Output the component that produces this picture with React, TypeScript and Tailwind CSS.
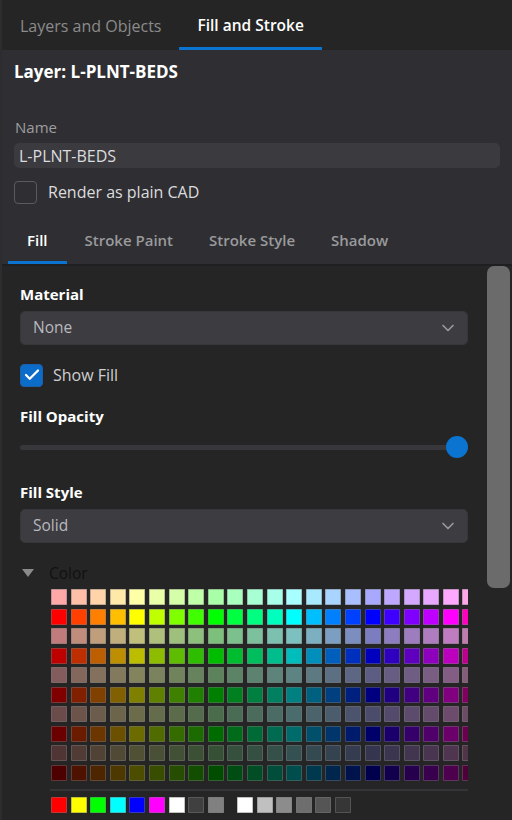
import { ChevronDown, Check } from "lucide-react";

const HUES = Array.from({ length: 24 }, (_, i) => i * 15);

// each row of the palette is one saturation / lightness pair applied to every hue
const ROWS: [number, number][] = [
  [100, 83],
  [100, 50],
  [35, 62],
  [100, 37],
  [17, 44],
  [100, 25],
  [18, 36],
  [100, 21],
  [20, 26],
  [100, 15],
];

const BASICS = ["#ff0000", "#ffff00", "#00ff00", "#00ffff", "#0000ff", "#ff00ff", "#ffffff", "#404040", "#808080"];
const GRAYS = ["#ffffff", "#c0c0c0", "#8c8c8c", "#6e6e6e", "#555555", "#363636"];

function Swatch({ color }: { color: string }) {
  return (
    <div
      className="h-4 w-4 shrink-0 rounded-[1px] shadow-[inset_0_0_0_1px_rgba(120,120,120,0.45)]"
      style={{ backgroundColor: color }}
    />
  );
}

function Select({ value }: { value: string }) {
  return (
    <div className="flex h-[34px] items-center justify-between rounded-[5px] border border-[#37373b] bg-[#3c3c41] pl-3 pr-[9px]">
      <span className="text-[15.5px] text-[#b9b9bd]">{value}</span>
      <ChevronDown size={20} strokeWidth={2} className="text-[#9a9a9e]" />
    </div>
  );
}

export default function App() {
  return (
    <div
      className="flex h-[820px] w-[512px] flex-col overflow-hidden border-l-2 border-[#2d2d30] bg-[#252526]"
      style={{ fontFamily: '"Open Sans", "Noto Sans", sans-serif' }}
    >
      {/* panel tabs */}
      <div className="flex h-[50px] shrink-0 bg-[#252525]">
        <div className="flex items-center px-[18px] pt-[2px] text-[16px] text-[#8b8b8b]">Layers and Objects</div>
        <div className="flex items-center border-b-[3px] border-[#0a74d0] px-[18px] pt-[5px] text-[15.5px] font-semibold text-white">
          Fill and Stroke
        </div>
      </div>

      {/* layer header */}
      <div className="flex shrink-0 flex-col bg-[#2f2f33]">
        <div className="px-3 pt-[11px] text-[17px] font-bold leading-[22px] text-white">Layer: L-PLNT-BEDS</div>
        <div className="mt-[33px] px-[13px] text-[15px] leading-[22px] text-[#9d9d9f]">Name</div>
        <div className="mx-3 mt-[5px] flex h-[25px] items-center rounded-[5px] bg-[#3a3a3f] px-[5px] text-[16px] text-[#dcdcde]">
          L-PLNT-BEDS
        </div>
        <div className="mt-3 flex items-center gap-[11px] px-3">
          <div className="h-[23px] w-[23px] rounded-[4px] border border-[#5b5b5e]" />
          <span className="text-[16px] text-[#dcdcde]">Render as plain CAD</span>
        </div>

        {/* sub tabs */}
        <div className="mt-[13px] flex h-[49px] items-stretch border-b-2 border-[#1f1f21] pl-[6px]">
          <div className="flex items-center border-b-[3px] border-[#0a74d0] px-[19px] pt-[3px] text-[15px] font-semibold text-white">
            Fill
          </div>
          <div className="flex items-center px-[18px] text-[15px] font-semibold text-[#9a9a9c]">Stroke Paint</div>
          <div className="flex items-center px-[18px] text-[15px] font-semibold text-[#9a9a9c]">Stroke Style</div>
          <div className="flex items-center px-[18px] text-[15px] font-semibold text-[#9a9a9c]">Shadow</div>
        </div>
      </div>

      {/* fill settings */}
      <div className="flex min-h-0 flex-1">
        <div className="flex w-[466px] flex-col pl-[18px]">
          <div className="mt-[17px] text-[15px] font-bold leading-[22px] text-white">Material</div>
          <div className="mt-[6px]">
            <Select value="None" />
          </div>

          <div className="mt-[18px] flex items-center gap-[10px]">
            <div className="flex h-[23px] w-[23px] items-center justify-center rounded-[4px] border border-[#1a5fa8] bg-[#0c6cc9]">
              <Check size={18} strokeWidth={3} className="text-white" />
            </div>
            <span className="text-[16px] text-[#cfcfd1]">Show Fill</span>
          </div>

          <div className="mt-[18px] text-[15px] font-bold leading-[22px] text-white">Fill Opacity</div>
          <div className="relative mt-[9px] flex h-[22px] items-center">
            <div className="h-[5px] w-full rounded-full bg-[#38383c]" />
            <div className="absolute right-0 top-0 h-[22px] w-[22px] rounded-full bg-[#0a74d0]" />
          </div>

          <div className="mt-[23px] text-[15px] font-bold leading-[22px] text-white">Fill Style</div>
          <div className="mt-[6px]">
            <Select value="Solid" />
          </div>

          <div className="mt-[19px] flex items-center">
            <svg width="12" height="10" viewBox="0 0 12 10" className="ml-[2px]">
              <polygon points="0,1 12,1 6,9" fill="#8a8a8a" />
            </svg>
            <span className="ml-[15px] text-[15.5px] leading-[22px] text-[#111111]">Color</span>
          </div>

          {/* palette */}
          <div className="ml-[31px] mt-[5px] flex flex-col gap-y-[3.5px] overflow-hidden">
            {ROWS.map(([s, l]) => (
              <div key={`${s}-${l}`} className="flex gap-x-[3.6px]">
                {HUES.map((h) => (
                  <Swatch key={h} color={`hsl(${h} ${s}% ${l}%)`} />
                ))}
              </div>
            ))}
          </div>
          <div className="ml-[30px] mt-[8px] h-[2px] bg-[#353537]" />
          <div className="ml-[31px] mt-[6px] flex gap-x-[3.6px]">
            {BASICS.map((c, i) => (
              <Swatch key={`b${i}`} color={c} />
            ))}
            <div className="w-[6px] shrink-0" />
            {GRAYS.map((c, i) => (
              <Swatch key={`g${i}`} color={c} />
            ))}
          </div>
        </div>

        {/* scrollbar */}
        <div className="ml-[19px] flex w-[23px] flex-col">
          <div className="h-[322px] rounded-[7px] bg-[#6b6b6b]" />
        </div>
      </div>
    </div>
  );
}
